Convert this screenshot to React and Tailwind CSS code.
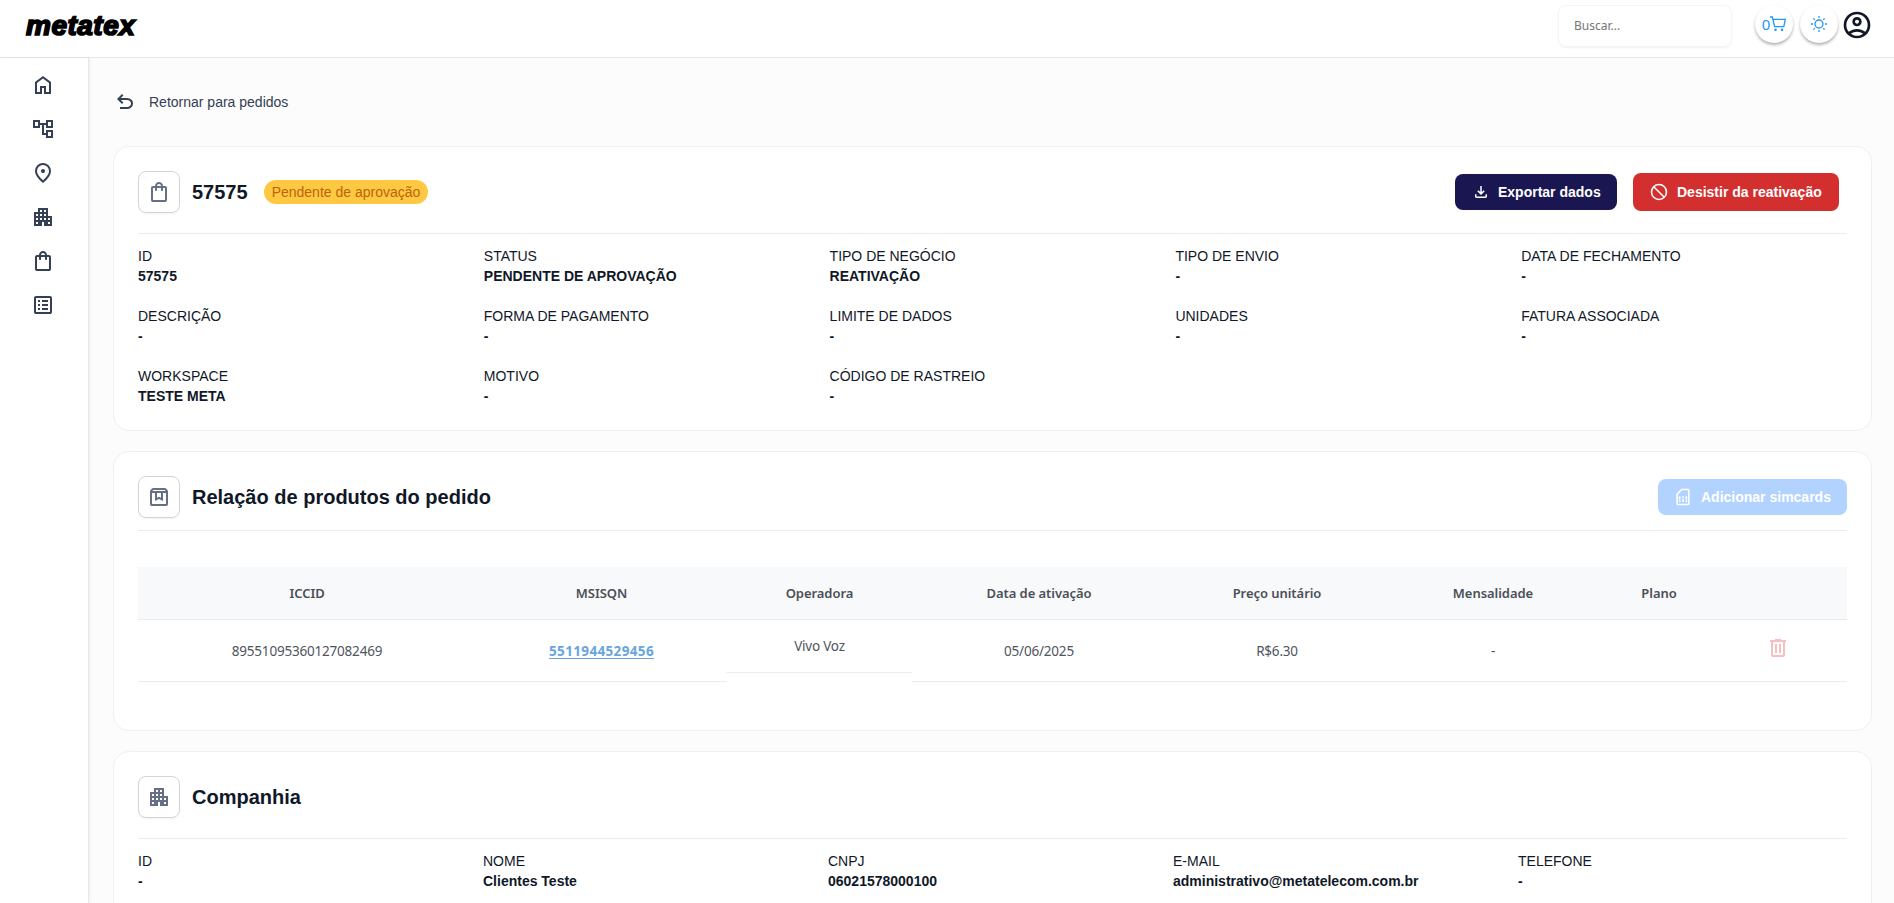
const ICONS = {
  home: "M240-200h120v-240h240v240h120v-360L480-740 240-560v360Zm-80 80v-480l320-240 320 240v480H520v-240h-80v240H160Z",
  tree: "M600-120v-120H440v-400h-80v120H80v-320h280v120h240v-120h280v320H600v-120h-80v320h80v-120h280v320H600ZM680-600h120v-160H680v160Zm0 400h120v-160H680v160ZM160-600h120v-160H160v160Z",
  pin: "M480-480q33 0 56.5-23.5T560-560q0-33-23.5-56.5T480-640q-33 0-56.5 23.5T400-560q0 33 23.5 56.5T480-480Zm0 294q122-112 181-203.5T720-552q0-109-69.5-178.5T480-800q-101 0-170.5 69.5T240-552q0 71 59 162.5T480-186Zm0 106Q319-217 239.5-334.5T160-552q0-150 96.5-239T480-880q127 0 223.5 89T800-552q0 100-79.5 217.5T480-80Z",
  apartment: "M120-120v-560h160v-160h400v320h160v400H520v-160h-80v160H120Zm80-80h80v-80h-80v80Zm0-160h80v-80h-80v80Zm0-160h80v-80h-80v80Zm160 160h80v-80h-80v80Zm0-160h80v-80h-80v80Zm0-160h80v-80h-80v80Zm160 320h80v-80h-80v80Zm0-160h80v-80h-80v80Zm0-160h80v-80h-80v80Zm160 480h80v-80h-80v80Zm0-160h80v-80h-80v80Z",
  bag: "M240-80q-33 0-56.5-23.5T160-160v-480q0-33 23.5-56.5T240-720h80q0-66 47-113t113-47q66 0 113 47t47 113h80q33 0 56.5 23.5T800-640v480q0 33-23.5 56.5T720-80H240Zm0-80h480v-480h-80v80q0 17-11.5 28.5T600-520q-17 0-28.5-11.5T560-560v-80H400v80q0 17-11.5 28.5T360-520q-17 0-28.5-11.5T320-560v-80h-80v480Zm160-560h160q0-33-23.5-56.5T480-800q-33 0-56.5 23.5T400-720Z",
  list: "M280-280h80v-80h-80v80Zm0-160h80v-80h-80v80Zm0-160h80v-80h-80v80Zm160 320h240v-80H440v80Zm0-160h240v-80H440v80Zm0-160h240v-80H440v80ZM200-120q-33 0-56.5-23.5T120-200v-560q0-33 23.5-56.5T200-840h560q33 0 56.5 23.5T840-760v560q0 33-23.5 56.5T760-120H200Zm0-80h560v-560H200v560Z",
  undo: "M280-200v-80h284q63 0 109.5-40T720-420q0-60-46.5-100T564-560H312l104 104-56 56-200-200 200-200 56 56-104 104h252q97 0 169.5 63T800-420q0 94-72.5 157T564-200H280Z",
  download: "M480-320 280-520l56-58 104 104v-326h80v326l104-104 56 58-200 200ZM240-160q-33 0-56.5-23.5T160-240v-120h80v120h480v-120h80v120q0 33-23.5 56.5T720-160H240Z",
  box: "M200-640v440h560v-440H640v320l-160-80-160 80v-320H200Zm0 520q-33 0-56.5-23.5T120-200v-499q0-14 4.5-27t13.5-24l50-61q11-14 27.5-21.5T250-840h460q18 0 34.5 7.5T772-811l50 61q9 11 13.5 24t4.5 27v499q0 33-23.5 56.5T760-120H200Zm16-600h528l-34-40H250l-34 40Zm184 80v190l80-40 80 40v-190H400Z",
  sim: "M280-240h80v-80h-80v80Zm0-120h80v-160h-80v160Zm160 120h80v-160h-80v160Zm0-200h80v-80h-80v80Zm160 200h80v-80h-80v80Zm0-120h80v-160h-80v160ZM240-80q-33 0-56.5-23.5T160-160v-480l240-240h320q33 0 56.5 23.5T800-800v640q0 33-23.5 56.5T720-80H240Zm0-80h480v-640H434L240-606v446Z",
  trash: "M280-120q-33 0-56.5-23.5T200-200v-520h-40v-80h200v-40h240v40h200v80h-40v520q0 33-23.5 56.5T680-120H280Zm400-600H280v520h400v-520ZM360-280h80v-360h-80v360Zm160 0h80v-360h-80v360Z",
  account: "M234-276q51-39 114-61.5T480-360q69 0 132 22.5T726-276q35-41 54.5-93T800-480q0-133-93.5-226.5T480-800q-133 0-226.5 93.5T160-480q0 59 19.5 111t54.5 93Zm246-164q-59 0-99.5-40.5T340-580q0-59 40.5-99.5T480-720q59 0 99.5 40.5T620-580q0 59-40.5 99.5T480-440Zm0 360q-83 0-156-31.5T197-197q-54-54-85.5-127T80-480q0-83 31.5-156T197-763q54-54 127-85.5T480-880q83 0 156 31.5T763-763q54 54 85.5 127T880-480q0 83-31.5 156T763-197q-54 54-127 85.5T480-80Zm0-80q53 0 100-15.5t86-44.5q-39-29-86-44.5T480-280q-53 0-100 15.5T294-220q39 29 86 44.5T480-160Zm0-360q26 0 43-17t17-43q0-26-17-43t-43-17q-26 0-43 17t-17 43q0 26 17 43t43 17Z",
};

function Icon({ name, className = "" }) {
  return (
    <svg viewBox="0 -960 960 960" fill="currentColor" className={`shrink-0 ${className}`}>
      <path d={ICONS[name]} />
    </svg>
  );
}

function CartIcon() {
  return (
    <svg viewBox="0 0 16 16" className="size-4" fill="none" stroke="currentColor" strokeWidth="1.3">
      <path d="M0 1h2.4l2.2 9.6h9.6M3 3.4h12.3l-1.5 7.2" />
      <circle cx="5.5" cy="13.8" r="1.3" fill="currentColor" stroke="none" />
      <circle cx="12" cy="13.8" r="1.3" fill="currentColor" stroke="none" />
    </svg>
  );
}

function SunIcon() {
  return (
    <svg viewBox="0 0 16 16" className="size-4" fill="none" stroke="currentColor" strokeWidth="1.3">
      <circle cx="8" cy="8" r="4" />
      <path d="M8 0v2M8 14v2M0 8h2M14 8h2M2.4 2.4l1.3 1.3M12.3 12.3l1.3 1.3M2.4 13.6l1.3-1.3M12.3 3.7l1.3-1.3" />
    </svg>
  );
}

function Header() {
  return (
    <header className="flex h-[58px] shrink-0 items-start border-b border-[#e4e7ec] bg-white pl-[26px] pr-[21px]">
      <span className="mt-[3px] text-[28px] leading-[46px] font-bold italic tracking-[0.5px] text-black [-webkit-text-stroke:1.7px_black]">
        metatex
      </span>
      <div className="ml-auto mt-[5px] flex h-[42px] w-[174px] items-center rounded-lg border border-[#f4f5f7] px-[15px] font-['Noto_Sans',sans-serif] text-[12px] text-[#757575] shadow-xs">
        Buscar...
      </div>
      <div className="mt-[5px] ml-[23px] flex size-[38px] items-center justify-center rounded-full bg-white text-[15px] text-[#2196f3] shadow-[0_2px_3px_rgba(0,0,0,0.3)]">
        <span className="font-['Noto_Sans',sans-serif]">0</span>
        <CartIcon />
      </div>
      <div className="mt-[5px] ml-[7px] flex size-[38px] items-center justify-center rounded-full bg-white text-[#2196f3] shadow-[0_2px_3px_rgba(0,0,0,0.3)]">
        <SunIcon />
      </div>
      <Icon name="account" className="mt-[9px] ml-[3px] size-8 text-[#101828]" />
    </header>
  );
}

function Sidebar() {
  return (
    <nav className="z-10 flex w-[89px] shrink-0 flex-col gap-5 border-r border-[#e4e7ec] bg-white pt-[15px] pl-[31px] text-[#344054] shadow-[1px_0_3px_rgba(0,0,0,0.06)]">
      {["home", "tree", "pin", "apartment", "bag", "list"].map((n) => (
        <Icon key={n} name={n} className="size-6" />
      ))}
    </nav>
  );
}

function Card({ className = "", children }) {
  return (
    <section className={`shrink-0 rounded-2xl border border-[#eff0f6] bg-white p-6 ${className}`}>{children}</section>
  );
}

function CardTitle({ icon, title, className = "", children }) {
  return (
    <div className={`flex items-start border-b border-[#eaecf0] ${className}`}>
      <div className="flex size-[42px] items-center justify-center rounded-lg border border-[#d0d5dd] text-[#667085] shadow-xs">
        <Icon name={icon} className="size-6" />
      </div>
      <h2 className="ml-3 text-[20px] leading-[42px] font-bold text-[#101828]">{title}</h2>
      {children}
    </div>
  );
}

function Fields({ items, className = "" }) {
  return (
    <dl className={`grid grid-cols-5 pt-3 text-[14px] leading-5 text-[#101828] ${className}`}>
      {items.map(([label, value]) => (
        <div key={label}>
          <dt>{label}</dt>
          <dd className="font-bold">{value}</dd>
        </div>
      ))}
    </dl>
  );
}

const ORDER = [
  ["ID", "57575"],
  ["STATUS", "PENDENTE DE APROVAÇÃO"],
  ["TIPO DE NEGÓCIO", "REATIVAÇÃO"],
  ["TIPO DE ENVIO", "-"],
  ["DATA DE FECHAMENTO", "-"],
  ["DESCRIÇÃO", "-"],
  ["FORMA DE PAGAMENTO", "-"],
  ["LIMITE DE DADOS", "-"],
  ["UNIDADES", "-"],
  ["FATURA ASSOCIADA", "-"],
  ["WORKSPACE", "TESTE META"],
  ["MOTIVO", "-"],
  ["CÓDIGO DE RASTREIO", "-"],
];

const COMPANY = [
  ["ID", "-"],
  ["NOME", "Clientes Teste"],
  ["CNPJ", "06021578000100"],
  ["E-MAIL", "administrativo@metatelecom.com.br"],
  ["TELEFONE", "-"],
];

const GRID = "grid grid-cols-[338px_251px_185px_254px_222px_210px_122px_127px]";

function ProductTable() {
  return (
    <div className="mt-9 font-['Noto_Sans',sans-serif] text-[13.5px] tracking-[-0.2px] text-[#50555e]">
      <div className={`${GRID} h-[52px] items-center bg-[#f8f9fb] pt-px text-center text-[13px] font-semibold tracking-[-0.05px] text-[#4b4f58]`}>
        {["ICCID", "MSISQN", "Operadora", "Data de ativação", "Preço unitário", "Mensalidade", "Plano"].map((h) => (
          <div key={h}>{h}</div>
        ))}
      </div>
      <div className={`${GRID} h-[63px] items-start border-t border-[#e9ebef] text-center leading-[62px] *:h-[62px] *:border-b *:border-[#e9ebef]`}>
        <div>89551095360127082469</div>
        <div className="font-bold tracking-[0.35px] text-[#6aa5dd] underline underline-offset-2">5511944529456</div>
        <div className="h-[53px]! leading-[53px]">Vivo Voz</div>
        <div>05/06/2025</div>
        <div>R$6.30</div>
        <div>-</div>
        <div />
        <div className="flex pt-4 pl-[46px]">
          <Icon name="trash" className="size-6 text-[#f8bfbf]" />
        </div>
      </div>
    </div>
  );
}

export default function App() {
  return (
    <div className="flex h-[903px] w-full flex-col overflow-hidden bg-[#fcfcfc] font-['Liberation_Sans',Arial,sans-serif]">
      <Header />
      <div className="flex min-h-0 flex-1">
        <Sidebar />
        <main className="flex min-w-0 flex-1 flex-col gap-5 overflow-hidden pr-[22px] pl-6">
          <a className="mt-8 mb-3 flex h-6 shrink-0 items-center gap-3 text-[14px] text-[#344054]">
            <Icon name="undo" className="size-6" />
            Retornar para pedidos
          </a>
          <Card className="h-[285px]">
            <CardTitle icon="bag" title="57575" className="h-[63px]">
              <span className="mt-[9px] ml-4 flex h-6 items-center rounded-full bg-[#ffc843] px-2 text-[14px] text-[#b9650a]">
                Pendente de aprovação
              </span>
              <div className="mr-2 ml-auto flex h-[42px] items-center gap-4 text-[14px] font-bold text-white">
                <button className="flex h-9 w-[162px] items-center rounded-lg bg-[#1a1652] pl-[17px]">
                  <Icon name="download" className="mr-2 -mt-px size-[18px]" />
                  Exportar dados
                </button>
                <button className="flex h-[38px] w-[206px] items-center rounded-lg bg-[#d32f2f] pl-4">
                  <svg viewBox="0 0 20 20" className="-mt-px mr-2 size-5" fill="none" stroke="currentColor" strokeWidth="1.6">
                    <circle cx="10" cy="10" r="7.5" />
                    <path d="M4.7 4.7l10.6 10.6" />
                  </svg>
                  Desistir da reativação
                </button>
              </div>
            </CardTitle>
            <Fields items={ORDER} className="gap-5" />
          </Card>
          <Card className="h-[280px]">
            <CardTitle icon="box" title="Relação de produtos do pedido" className="h-[55px]">
              <button className="mt-[3px] ml-auto flex h-9 w-[189px] items-center rounded-lg bg-[#b2d3ff] pl-[15px] text-[14px] font-bold text-white">
                <Icon name="sim" className="-mt-px mr-2 size-5" />
                Adicionar simcards
              </button>
            </CardTitle>
            <ProductTable />
          </Card>
          <Card className="h-[285px]">
            <CardTitle icon="apartment" title="Companhia" className="h-[63px]" />
            <Fields items={COMPANY} className="gap-4" />
          </Card>
        </main>
      </div>
    </div>
  );
}
